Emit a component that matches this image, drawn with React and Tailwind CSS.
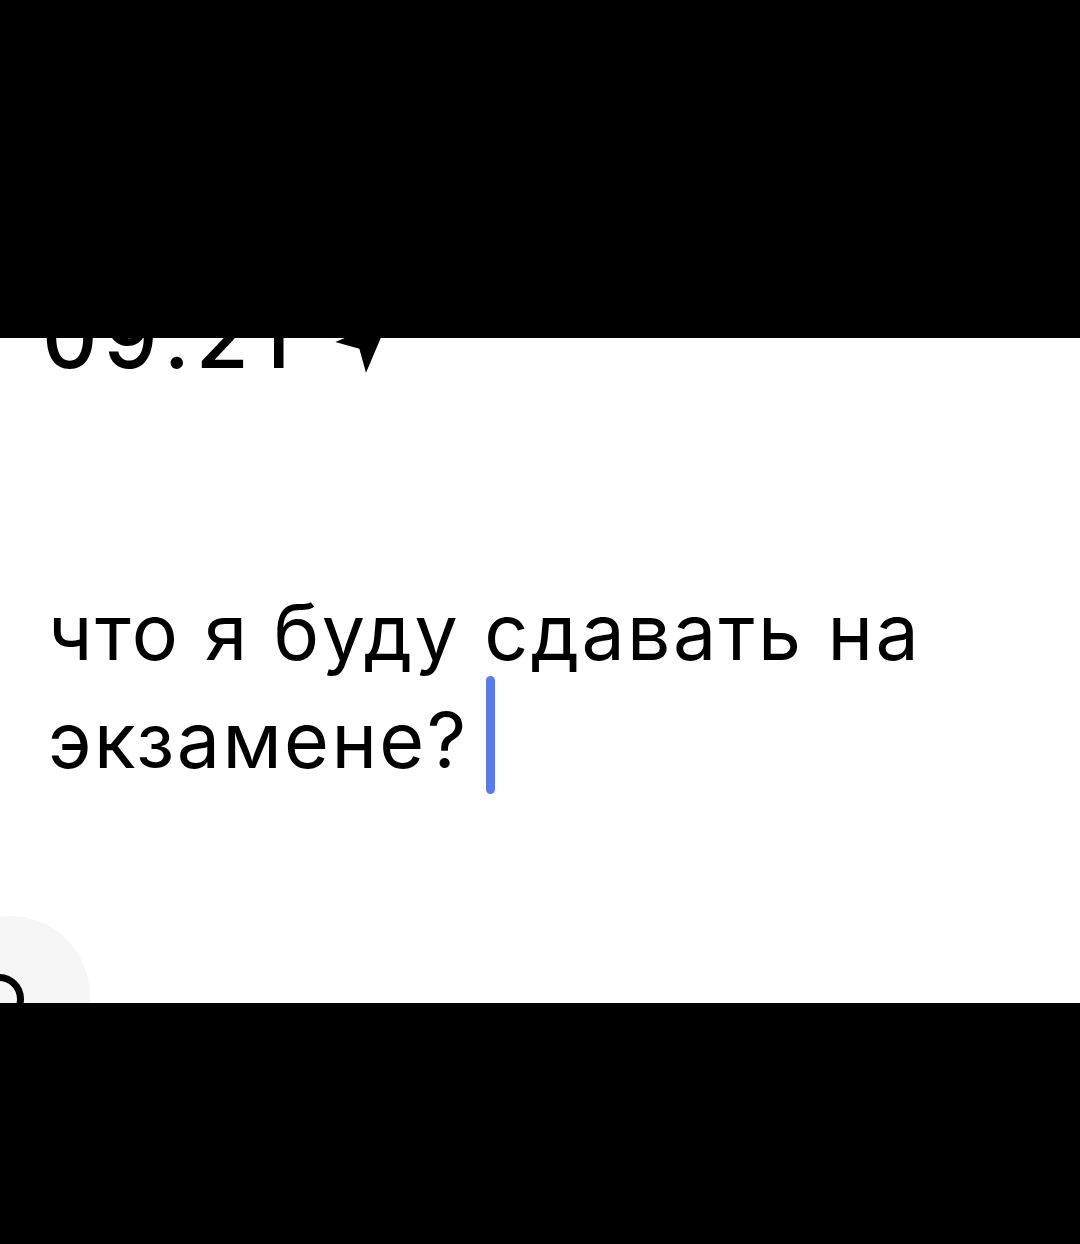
import React from 'react';

export default function App() {
  return (
    <div className="w-[1080px] h-[1244px] bg-black flex flex-col" style={{ fontFamily: 'Inter, "Noto Sans", sans-serif' }}>
      <div className="h-[338px] shrink-0" />
      <div className="h-[665px] shrink-0 bg-white overflow-hidden relative flex flex-col">
        {/* status bar, cut off by the top band */}
        <div className="flex items-end gap-[34px] pl-[42px] -mt-[30px] h-[72px] text-[86px] leading-none font-medium tracking-[6px] text-black">
          <span>09:21</span>
          <svg width="64" height="64" viewBox="0 0 24 24" className="mb-[2px]">
            <path d="M22 2 L2 10.5 L11 13 L13.5 22 Z" fill="black" />
          </svg>
        </div>

        <div className="pl-[48px] pr-[40px] mt-[198px] text-[77px] leading-[108px] text-black tracking-[2.4px]">
          что я буду сдавать на
          <br />
          экзамене?
          <span className="inline-block align-middle w-[9px] h-[118px] rounded-full bg-[#5b7be8] ml-[18px] -mt-[24px]" />
        </div>

        {/* bottom-left button, clipped */}
        <div className="absolute -left-[70px] top-[578px] w-[160px] h-[160px] rounded-full bg-[#f6f6f6]">
          <div className="absolute left-[44px] top-[58px] w-[50px] h-[50px] rounded-full border-[7px] border-black" />
        </div>
      </div>
      <div className="flex-1" />
    </div>
  );
}
